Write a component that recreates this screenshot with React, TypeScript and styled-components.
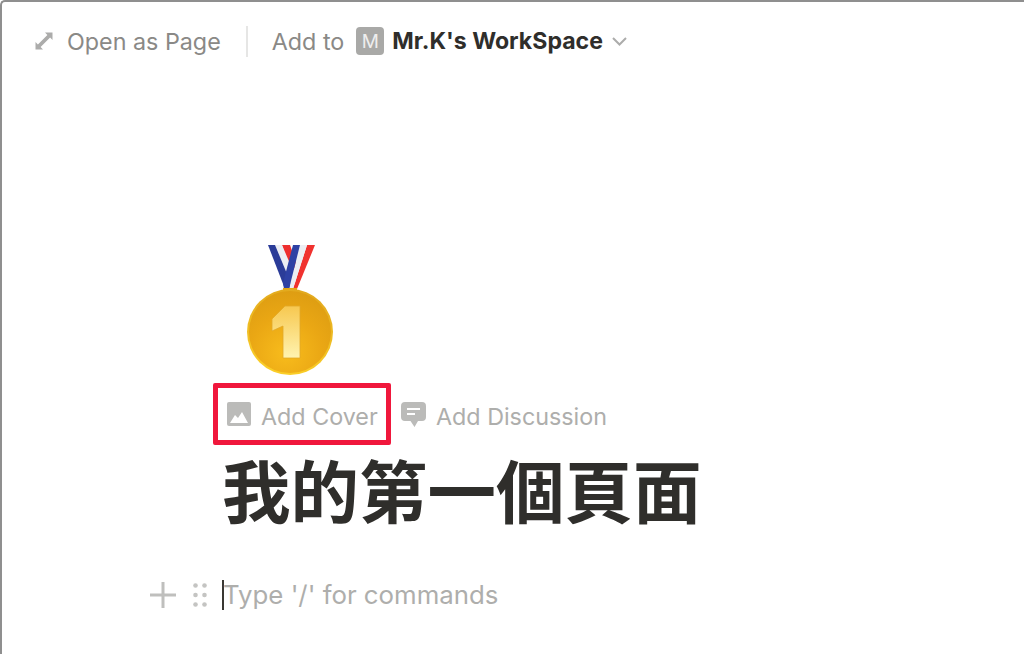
import styled, { createGlobalStyle } from "styled-components";

const GlobalStyle = createGlobalStyle`
  html, body {
    margin: 0;
    padding: 0;
    background: #fff;
  }
  body {
    font-family: "Inter", "Liberation Sans", "Noto Sans CJK TC", sans-serif;
  }
`;

const Page = styled.div`
  width: 1024px;
  height: 654px;
  box-sizing: border-box;
  overflow: hidden;
  border-top: 2px solid #8f8f8f;
  border-left: 2px solid #8f8f8f;
  border-top-left-radius: 5px;
  background: #fff;
`;

const TopBar = styled.div`
  display: flex;
  align-items: center;
  height: 32px;
  margin-top: 23px;
  padding-left: 33px;
`;

const Label = styled.span`
  font-size: 23.3px;
  color: #8a8986;
  white-space: nowrap;
`;

const Divider = styled.div`
  width: 2px;
  height: 31px;
  background: #e6e6e5;
  margin: 0 24px 0 25px;
`;

const WorkspaceBadge = styled.div`
  width: 28px;
  height: 28px;
  border-radius: 4px;
  background: #a9a9a7;
  color: #eeeeee;
  font-size: 19px;
  display: flex;
  align-items: center;
  justify-content: center;
  margin: 0 8px 0 12px;
`;

const WorkspaceName = styled.span`
  font-size: 23.1px;
  font-weight: 700;
  color: #2f2e2b;
  white-space: nowrap;
`;

const Content = styled.div`
  display: flex;
  flex-direction: column;
  padding-left: 211px;
  margin-top: 188px;
`;

const MedalWrap = styled.div`
  height: 138px;
  padding-left: 34px;
`;

const ActionRow = styled.div`
  display: flex;
  align-items: center;
`;

const CoverButton = styled.div`
  display: flex;
  align-items: center;
  gap: 10px;
  width: 178px;
  height: 62px;
  box-sizing: border-box;
  border: 5px solid #f0173c;
  border-radius: 2px;
  padding-left: 9px;
`;

const DiscussionButton = styled.div`
  display: flex;
  align-items: center;
  gap: 10px;
  margin-left: 10px;
`;

const ActionLabel = styled.span`
  font-size: 23.3px;
  padding-top: 4px;
  color: #aeaeac;
  white-space: nowrap;
`;

const Title = styled.h1`
  margin: 10px 0 0 9px;
  font-family: "Noto Sans CJK TC", sans-serif;
  font-size: 68.500px;
  line-height: 68px;
  font-weight: 700;
  color: #2f2e2b;
  white-space: nowrap;
`;

const BlockRow = styled.div`
  display: flex;
  align-items: center;
  height: 40px;
  margin: 52px 0 0 -63px;
`;

const Caret = styled.div`
  width: 2px;
  height: 30px;
  background: #3a3833;
  margin-left: 15px;
`;

const Placeholder = styled.span`
  font-size: 25.800px;
  color: #aeaeac;
  margin-left: -1px;
  padding-bottom: 2px;
  white-space: nowrap;
`;

const ExpandIcon = () => (
  <svg width="18" height="18" viewBox="0 0 18 18" fill="#acacab" style={{ marginRight: 14 }}>
    <path d="M0.5 17.5V10l2.4 2.4L12.4 3 10 .5h7.5V8l-2.4-2.4L5.6 15l2.4 2.5z" />
  </svg>
);

const Chevron = () => (
  <svg width="15" height="9" viewBox="0 0 15 9" fill="none" stroke="#acacab" strokeWidth="2" style={{ marginLeft: 9 }}>
    <path d="M1 1l6.5 6.5L14 1" />
  </svg>
);

const Medal = () => (
  <svg width="88" height="132" viewBox="0 0 88 132">
    <defs>
      <linearGradient id="rim" x1="0.6" y1="0" x2="0.4" y2="1">
        <stop offset="0" stopColor="#e2a91e" />
        <stop offset="1" stopColor="#fbcf28" />
      </linearGradient>
      <radialGradient id="coin" cx="0.45" cy="0.75" r="0.8">
        <stop offset="0" stopColor="#f8bc1c" />
        <stop offset="0.55" stopColor="#eaa714" />
        <stop offset="1" stopColor="#dc9c12" />
      </radialGradient>
      <linearGradient id="one" x1="0" y1="0" x2="0" y2="1">
        <stop offset="0" stopColor="#f7c850" />
        <stop offset="1" stopColor="#fff3b0" />
      </linearGradient>
    </defs>
    <path d="M35 0h8l7 20-6 8z" fill="#ee2f2f" />
    <path d="M28 0h7l12 28-4 8z" fill="#eceef3" />
    <path d="M21 0h7l15 36 1 8h-6z" fill="#2b3c98" />
    <path d="M60 0h8L50 44h-4z" fill="#f0322f" />
    <path d="M53 0h7L46 44h-4z" fill="#eceef3" />
    <path d="M46 0h7L42 44h-5l-1-6z" fill="#2e41a4" />
    <path d="M36 43h14v4H36z" fill="#e3a713" />
    <circle cx="43" cy="87" r="43" fill="url(#rim)" />
    <circle cx="43" cy="87" r="41" fill="url(#coin)" />
    <path d="M38 61h15v52H36V81l-11 5V74z" fill="url(#one)" stroke="#e2a828" strokeWidth="0.8" />
  </svg>
);

const ImageIcon = () => (
  <svg width="24" height="24" viewBox="0 0 24 24">
    <rect width="24" height="24" rx="2" fill="#bbbbb9" />
    <path d="M3 21l5-8 3 3 4-6 6 11z" fill="#fff" />
  </svg>
);

const DiscussionIcon = () => (
  <svg width="25" height="25" viewBox="0 0 25 25">
    <path d="M4 0h17a4 4 0 0 1 4 4v11a4 4 0 0 1-4 4h-4l-3.500 6-4-6H4a4 4 0 0 1-4-4V4a4 4 0 0 1 4-4z" fill="#bbbbb9" />
    <path d="M6 6h13v2H6zM6 11h8v2H6z" fill="#fff" />
  </svg>
);

const PlusIcon = () => (
  <svg width="26" height="26" viewBox="0 0 26 26" fill="#bfbfbd" style={{ marginRight: 17 }}>
    <path d="M11.500 0h3v11.500H26v3H14.500V26h-3V14.500H0v-3h11.500z" />
  </svg>
);

const DragIcon = () => (
  <svg width="14" height="24" viewBox="0 0 14 24" fill="#c4c4c2">
    <circle cx="2.500" cy="2.500" r="2.300" />
    <circle cx="11.500" cy="2.500" r="2.300" />
    <circle cx="2.500" cy="12" r="2.300" />
    <circle cx="11.500" cy="12" r="2.300" />
    <circle cx="2.500" cy="21.500" r="2.300" />
    <circle cx="11.500" cy="21.500" r="2.300" />
  </svg>
);

const App = () => {
  return (
    <>
      <GlobalStyle />
      <Page>
        <TopBar>
          <ExpandIcon />
          <Label>Open as Page</Label>
          <Divider />
          <Label>Add to</Label>
          <WorkspaceBadge>M</WorkspaceBadge>
          <WorkspaceName>Mr.K's WorkSpace</WorkspaceName>
          <Chevron />
        </TopBar>
        <Content>
          <MedalWrap>
            <Medal />
          </MedalWrap>
          <ActionRow>
            <CoverButton>
              <ImageIcon />
              <ActionLabel>Add Cover</ActionLabel>
            </CoverButton>
            <DiscussionButton>
              <DiscussionIcon />
              <ActionLabel>Add Discussion</ActionLabel>
            </DiscussionButton>
          </ActionRow>
          <Title>我的第一個頁面</Title>
          <BlockRow>
            <PlusIcon />
            <DragIcon />
            <Caret />
            <Placeholder>Type '/' for commands</Placeholder>
          </BlockRow>
        </Content>
      </Page>
    </>
  );
};

export default App;
